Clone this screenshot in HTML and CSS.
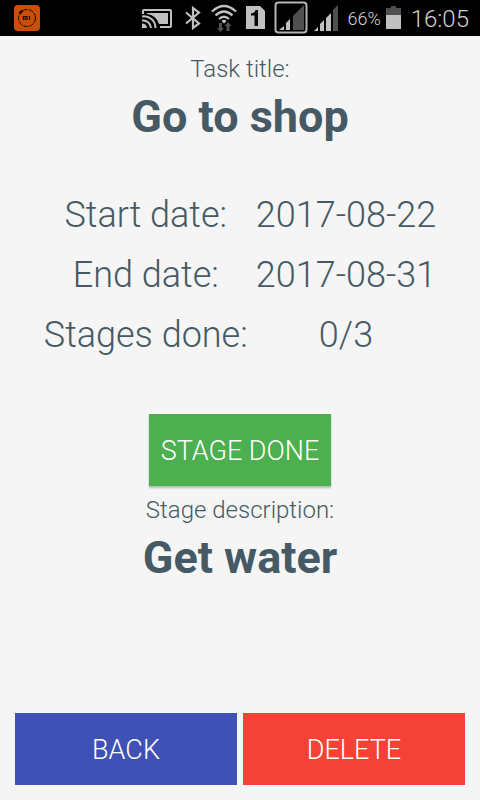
FILE: index.html
```html
<!DOCTYPE html>
<html lang="en">
<head>
<meta charset="utf-8">
<meta name="viewport" content="width=device-width, initial-scale=1">
<title>Go to shop</title>
<link rel="stylesheet" href="styles.css">
</head>
<body>
<header class="status">
  <svg class="app-icon" width="26" height="26" viewBox="0 0 26 26" aria-hidden="true">
    <rect width="26" height="26" rx="4" fill="#cc4e04"/>
    <circle cx="13" cy="13" r="8.5" fill="none" stroke="#180800" stroke-width="1" stroke-dasharray="5 1"/>
    <path d="M5.500 8.500l3-3" stroke="#180800" stroke-width="2.400"/>
    <path d="M9.500 15v-3.500h3.500V15M11.300 12.500V15M15.500 11v4" fill="none" stroke="#180800" stroke-width="1.200"/>
  </svg>
  <div class="indicators">
    <svg width="32" height="20" viewBox="0 0 32 20" aria-hidden="true">
      <path d="M2 6V3q0-1 1-1h26q1 0 1 1v15q0 1-1 1H19" fill="none" stroke="#c0c0c0" stroke-width="2"/>
      <path d="M6 5h21v11H18Q15 7 6 6z" fill="#c0c0c0"/>
      <path d="M1 8.500A11.500 11.500 0 0 1 14.500 20M1 12.500A8 8 0 0 1 10 20" fill="none" stroke="#c0c0c0" stroke-width="2"/>
      <path d="M1 15.500A5 5 0 0 1 6 20H1z" fill="#c0c0c0"/>
    </svg>
    <svg class="bluetooth" width="18" height="24" viewBox="0 0 18 24" aria-hidden="true">
      <path d="M2 6.500l13 11L9 22V2l6 4.500-13 11" fill="none" stroke="#c0c0c0" stroke-width="2.200"/>
    </svg>
    <svg class="wifi" width="26" height="28" viewBox="0 0 26 28" aria-hidden="true">
      <path d="M1 7.500Q13-3.500 25 7.500M4.500 11.500Q13 3.500 21.500 11.500M8 15Q13 10.500 18 15" fill="none" stroke="#c0c0c0" stroke-width="2.200"/>
      <path d="M10.500 17Q13 14.500 15.500 17L13 19.500z" fill="#c0c0c0"/>
      <path d="M8 19h3v5h2l-3.500 4L6 24h2zM15.500 27v-5h-2l3.500-4 3.500 4h-2v5z" fill="#505050"/>
    </svg>
    <svg class="sim" width="19" height="24" viewBox="0 0 19 24" aria-hidden="true">
      <path d="M0 0h14l5 5v18H0z" fill="#c0c0c0"/>
      <path d="M5 7.500Q9 7 9.500 4H12V20H8.500V9.500H5z" fill="#080808"/>
    </svg>
    <svg class="signal-boxed" width="34" height="34" viewBox="0 0 34 34" aria-hidden="true">
      <rect x="1.500" y="1.500" width="31" height="30" rx="3" fill="none" stroke="#b4b4b4" stroke-width="2"/>
      <path d="M5 29l5-4v4zM12 29v-7l4-4v11z" fill="#c0c0c0"/>
      <path d="M19 29V15L30 4v25z" fill="#505050"/>
    </svg>
    <svg class="signal" width="26" height="26" viewBox="0 0 26 26" aria-hidden="true">
      <path d="M1 26l4-4v4zM7 26v-7l4-4v11zM13 26V13l5-5v18z" fill="#c0c0c0"/>
      <path d="M20 26V5l5-5v26z" fill="#505050"/>
    </svg>
    <span class="percent">66%</span>
    <svg class="battery" width="15" height="24" viewBox="0 0 15 24" aria-hidden="true">
      <path d="M0 2h5V0h5v2h5v7H0z" fill="#505050"/>
      <path d="M0 9h15v14H0z" fill="#c0c0c0"/>
    </svg>
    <span class="clock">16:05</span>
  </div>
</header>
<main class="screen">
  <section class="field">
    <p class="caption">Task title:</p>
    <h1 class="heading">Go to shop</h1>
  </section>
  <table class="details">
    <tr><th scope="row">Start date:</th><td>2017-08-22</td></tr>
    <tr><th scope="row">End date:</th><td>2017-08-31</td></tr>
    <tr><th scope="row">Stages done:</th><td>0/3</td></tr>
  </table>
  <button class="button done" type="button">STAGE DONE</button>
  <section class="field">
    <p class="caption">Stage description:</p>
    <h2 class="heading">Get water</h2>
  </section>
  <nav class="actions">
    <button class="button back" type="button">BACK</button>
    <button class="button delete" type="button">DELETE</button>
  </nav>
</main>
</body>
</html>
```
FILE: styles.css
```css
* {
  box-sizing: border-box;
}

body {
  display: flex;
  flex-direction: column;
  min-height: 100vh;
  margin: 0;
  background: #f5f5f5;
  color: #455a64;
  font-family: Roboto, sans-serif;
  font-weight: 300;
}

.status {
  display: flex;
  align-items: center;
  justify-content: space-between;
  height: 36px;
  padding: 0 11px 0 14px;
  background: #000;
  color: #d0d0d0;
}

.indicators {
  display: flex;
  align-items: center;
}

.bluetooth {
  margin-left: 11px;
}

.wifi {
  margin-left: 9px;
}

.sim {
  margin-left: 9px;
}

.signal-boxed {
  margin-left: 9px;
}

.signal {
  margin-left: 5px;
}

.percent {
  margin-left: 8px;
  padding-top: 2px;
  font-size: 18px;
  line-height: 22px;
}

.battery {
  margin-left: 5px;
}

.clock {
  margin-left: 10px;
  padding-top: 2px;
  font-size: 24px;
}

.screen {
  display: flex;
  flex: 1;
  flex-direction: column;
  align-items: center;
  padding: 19px 15px 15px;
}

.field {
  text-align: center;
}

.caption {
  margin: 0;
  font-size: 24px;
  line-height: 28px;
}

.heading {
  margin: 7px 0 0;
  font-size: 45px;
  font-weight: 700;
  line-height: 54px;
}

.details {
  margin: 41px 0 49px;
  border-collapse: collapse;
  font-size: 36px;
  line-height: 60px;
  text-align: center;
}

.details th,
.details td {
  padding: 0 4px;
  font-weight: 300;
}

.button {
  height: 72px;
  padding: 2px 12px 0;
  border: 0;
  color: #fff;
  font: inherit;
  font-size: 27px;
}

.done {
  margin-bottom: 10px;
  background: #4caf50;
  box-shadow: 0 2px 2px rgba(0, 0, 0, 0.25);
}

.actions {
  display: flex;
  gap: 6px;
  align-self: stretch;
  margin-top: auto;
}

.actions .button {
  flex: 1;
}

.back {
  background: #3f51b5;
}

.delete {
  background: #f44336;
}
```
